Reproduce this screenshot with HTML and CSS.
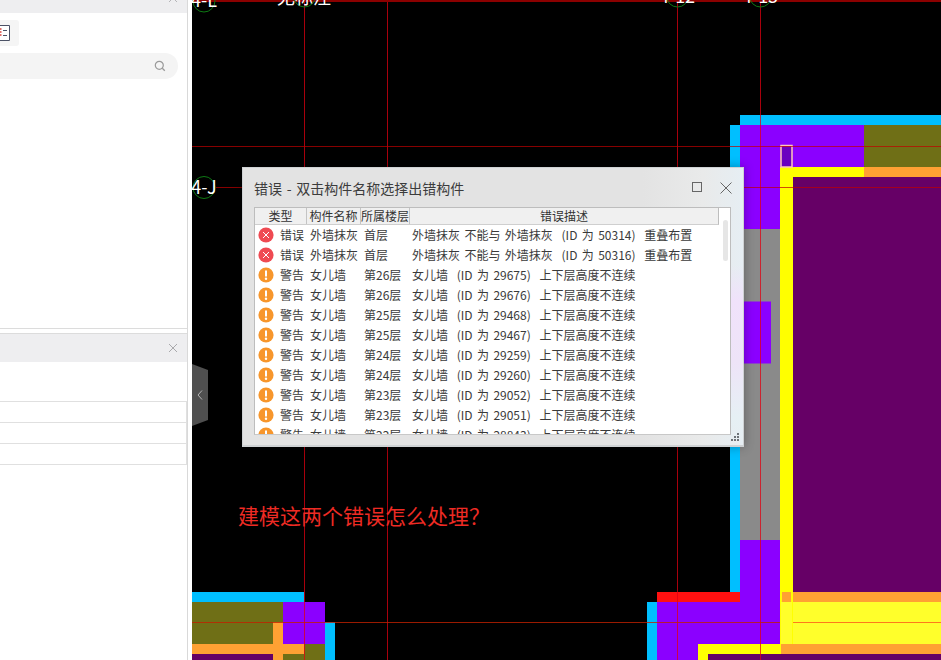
FILE: index.html
```html
<!DOCTYPE html>
<html lang="zh-CN">
<head>
<meta charset="utf-8">
<title>错误</title>
<link rel="stylesheet" href="styles.css">
</head>
<body>
<svg class="defs" width="0" height="0" aria-hidden="true">
  <symbol id="ic-err" viewBox="0 0 16 16"><circle cx="8" cy="8" r="7.6" fill="#ef4a52"/><path d="M5 5l6 6M11 5l-6 6" stroke="#fff" stroke-width="1" fill="none"/></symbol>
  <symbol id="ic-warn" viewBox="0 0 16 16"><circle cx="8" cy="8" r="7.6" fill="#f7962c"/><path d="M8 3.4v6" stroke="#fff" stroke-width="2" fill="none"/><circle cx="8" cy="11.8" r="1.2" fill="#fff"/></symbol>
</svg>
<div class="app">
  <aside class="side">
    <section class="panel panel-top">
      <header class="panel-head head-top">
        <svg class="close" width="10" height="10" viewBox="0 0 10 10"><path d="M1 1l8 8M9 1L1 9" stroke="#b5b5b8" stroke-width="1" fill="none"/></svg>
      </header>
      <div class="tools">
        <div class="tool">
          <svg width="19" height="26" viewBox="0 0 19 26"><path d="M0 5.500H9.500V20.500H0" fill="#fff" stroke="#4c5266"/><path d="M0 9h1.500M0 12h1.500M0 15h1.500" stroke="#d8403a" stroke-width="1.500"/><path d="M3 10.500h4M3 15.500h4" stroke="#4c5266"/></svg>
        </div>
      </div>
      <div class="search">
        <svg width="12" height="12" viewBox="0 0 12 12"><circle cx="5.300" cy="5.300" r="4" fill="none" stroke="#9a9a9a" stroke-width="1.200"/><path d="M8.300 8.300l2.500 2.500" stroke="#9a9a9a" stroke-width="1.300"/></svg>
      </div>
    </section>
    <section class="panel panel-bottom">
      <header class="panel-head head-bottom">
        <svg class="close" width="10" height="10" viewBox="0 0 10 10"><path d="M1 1l8 8M9 1L1 9" stroke="#a9a9ac" stroke-width="1" fill="none"/></svg>
      </header>
      <div class="rows">
        <div class="prow"></div>
        <div class="prow"></div>
        <div class="prow"></div>
      </div>
    </section>
  </aside>

  <main class="canvas">
    <svg class="drawing" width="749" height="660" viewBox="192 0 749 660">
      <rect x="192" y="0" width="749" height="660" fill="#000"/>
      <g class="cyan">
        <rect x="740" y="115" width="201" height="10"/>
        <rect x="730" y="125" width="10" height="467"/>
        <rect x="192" y="592" width="112" height="10"/>
        <rect x="325" y="622" width="10" height="38"/>
        <rect x="647" y="602" width="10" height="58"/>
      </g>
      <g class="violet">
        <rect x="740" y="125" width="124" height="42"/>
        <rect x="740" y="167" width="40" height="62"/>
        <rect x="740" y="540" width="40" height="62"/>
        <rect x="657" y="602" width="124" height="42"/>
        <rect x="657" y="644" width="41" height="16"/>
        <rect x="283" y="602" width="42" height="42"/>
      </g>
      <g class="olive">
        <rect x="864" y="125" width="77" height="42"/>
        <rect x="192" y="602" width="91" height="20"/>
        <rect x="192" y="622" width="81" height="22"/>
        <rect x="283" y="654" width="21" height="6"/>
        <rect x="304" y="644" width="21" height="16"/>
      </g>
      <g class="plum">
        <rect x="792" y="177" width="149" height="415"/>
        <rect x="708" y="654" width="233" height="6"/>
        <rect x="192" y="654" width="81" height="6"/>
      </g>
      <g class="yellow">
        <rect x="780" y="167" width="84" height="10"/>
        <rect x="780" y="177" width="13" height="467"/>
        <rect x="698" y="644" width="83" height="10"/>
        <rect x="698" y="654" width="10" height="6"/>
      </g>
      <g class="orange">
        <rect x="864" y="167" width="77" height="10"/>
        <rect x="782" y="592" width="9" height="10"/>
        <rect x="793" y="592" width="148" height="10"/>
        <rect x="781" y="644" width="160" height="10"/>
        <rect x="192" y="644" width="112" height="10"/>
        <rect x="273" y="622" width="10" height="38"/>
      </g>
      <g class="lemon">
        <rect x="781" y="602" width="11" height="42"/>
        <rect x="793" y="602" width="148" height="42"/>
      </g>
      <rect class="gray" x="740" y="229" width="40" height="311"/>
      <rect class="violet-2" x="740" y="301.500" width="31" height="62"/>
      <rect class="red" x="657" y="592" width="83" height="10"/>
      <rect class="slot" x="781" y="145.500" width="11" height="21.500"/>
      <g class="axis">
        <path d="M304.500 0V660M387.500 0V660M677.500 0V660M760.500 0V660"/>
        <path class="axis-h" d="M192 146.500H941M216 187.500H941"/>
        <path class="axis-dim" d="M192 622.500H780"/>
        <path class="axis-top" d="M192 1H941"/>
      </g>
      <path class="orange-line" d="M793 622.500H941"/>
      <g class="bubbles">
        <circle cx="204" cy="1" r="11"/>
        <circle cx="304.500" cy="-4" r="11"/>
        <circle cx="677.500" cy="-4" r="11"/>
        <circle cx="760.500" cy="-4" r="11"/>
        <circle cx="204" cy="187.500" r="11"/>
      </g>
      <g class="labels">
        <text x="204" y="7">4-L</text>
        <text x="304" y="4">无标注</text>
        <text x="677" y="3">4-12</text>
        <text x="760" y="3">4-13</text>
        <text x="204" y="194">4-J</text>
      </g>
    </svg>

    <button class="collapse" type="button" aria-label="收起">
      <svg width="6" height="10" viewBox="0 0 6 10"><path d="M5 .5L1 5l4 4.500" fill="none" stroke="#b4b4b4" stroke-width="1"/></svg>
    </button>

    <div class="dialog">
      <div class="titlebar">
        <span class="title">错误 - 双击构件名称选择出错构件</span>
        <svg class="win-btn" width="11" height="11" viewBox="0 0 11 11"><rect x=".5" y=".5" width="9" height="9" fill="none" stroke="#666"/></svg>
        <svg class="win-btn win-close" width="12" height="12" viewBox="0 0 12 12"><path d="M.5.500l11 11M11.500.500l-11 11" stroke="#666" fill="none"/></svg>
      </div>
      <div class="list">
        <div class="list-head">
          <span class="hc hc-type">类型</span>
          <span class="hc hc-name">构件名称</span>
          <span class="hc hc-floor">所属楼层</span>
          <span class="hc hc-desc">错误描述</span>
        </div>
        <div class="row"><svg class="ic"><use href="#ic-err"/></svg><span>错误</span><span>外墙抹灰</span><span>首层</span><span class="d">外墙抹灰 不能与 外墙抹灰  (ID 为 50314)  重叠布置</span></div>
        <div class="row"><svg class="ic"><use href="#ic-err"/></svg><span>错误</span><span>外墙抹灰</span><span>首层</span><span class="d">外墙抹灰 不能与 外墙抹灰  (ID 为 50316)  重叠布置</span></div>
        <div class="row"><svg class="ic"><use href="#ic-warn"/></svg><span>警告</span><span>女儿墙</span><span>第26层</span><span class="d">女儿墙  (ID 为 29675)  上下层高度不连续</span></div>
        <div class="row"><svg class="ic"><use href="#ic-warn"/></svg><span>警告</span><span>女儿墙</span><span>第26层</span><span class="d">女儿墙  (ID 为 29676)  上下层高度不连续</span></div>
        <div class="row"><svg class="ic"><use href="#ic-warn"/></svg><span>警告</span><span>女儿墙</span><span>第25层</span><span class="d">女儿墙  (ID 为 29468)  上下层高度不连续</span></div>
        <div class="row"><svg class="ic"><use href="#ic-warn"/></svg><span>警告</span><span>女儿墙</span><span>第25层</span><span class="d">女儿墙  (ID 为 29467)  上下层高度不连续</span></div>
        <div class="row"><svg class="ic"><use href="#ic-warn"/></svg><span>警告</span><span>女儿墙</span><span>第24层</span><span class="d">女儿墙  (ID 为 29259)  上下层高度不连续</span></div>
        <div class="row"><svg class="ic"><use href="#ic-warn"/></svg><span>警告</span><span>女儿墙</span><span>第24层</span><span class="d">女儿墙  (ID 为 29260)  上下层高度不连续</span></div>
        <div class="row"><svg class="ic"><use href="#ic-warn"/></svg><span>警告</span><span>女儿墙</span><span>第23层</span><span class="d">女儿墙  (ID 为 29052)  上下层高度不连续</span></div>
        <div class="row"><svg class="ic"><use href="#ic-warn"/></svg><span>警告</span><span>女儿墙</span><span>第23层</span><span class="d">女儿墙  (ID 为 29051)  上下层高度不连续</span></div>
        <div class="row"><svg class="ic"><use href="#ic-warn"/></svg><span>警告</span><span>女儿墙</span><span>第22层</span><span class="d">女儿墙  (ID 为 28843)  上下层高度不连续</span></div>
        <div class="scroll-thumb"></div>
      </div>
      <svg class="grip" width="9" height="9" viewBox="0 0 9 9"><path d="M6 0h2v2H6zM3 3h2v2H3zM6 3h2v2H6zM0 6h2v2H0zM3 6h2v2H3zM6 6h2v2H6z" fill="#6e7378"/></svg>
    </div>

    <p class="note">建模这两个错误怎么处理？</p>
  </main>
</div>
</body>
</html>
```

FILE: styles.css
```css
* { box-sizing: border-box; }
html, body { margin: 0; padding: 0; height: 100%; overflow: hidden; }
body { font-family: "Noto Sans CJK SC", "Noto Sans", sans-serif; background: #000; }
.defs { position: absolute; }

.app { display: flex; width: 941px; height: 660px; }

/* left side panels */
.side {
  width: 192px; flex: none; height: 660px; background: #fff;
  display: flex; flex-direction: column; gap: 4px;
  padding-right: 4px; position: relative;
}
.side::after { content: ""; position: absolute; left: 187px; top: 0; bottom: 0; width: 1px; background: #d9d9d9; }
.panel { width: 187px; background: #fff; }
.panel-top { height: 329px; border-bottom: 1px solid #dcdcdc; }
.panel-bottom { flex: 1; border-top: 1px solid #dcdcdc; }
.panel-head { background: #eeeef0; display: flex; align-items: center; justify-content: flex-end; }
.head-top { height: 13px; padding-right: 9px; overflow: hidden; }
.head-top .close { margin-top: -17px; }
.head-bottom { height: 28px; padding-right: 9px; }
.tools { padding-top: 7px; height: 40px; }
.tool { width: 19px; height: 26px; background: #f5f5f5; border-radius: 0 3px 3px 0; }
.tool svg { display: block; }
.search {
  width: 178px; height: 26px; background: #f4f4f4; border-radius: 0 13px 13px 0;
  display: flex; align-items: center; justify-content: flex-end; padding-right: 12px;
}
.rows { margin-top: 39px; width: 187px; border-top: 1px solid #e0e0e0; }
.prow { height: 21px; border-right: 1px solid #e0e0e0; border-bottom: 1px solid #e0e0e0; }

/* CAD canvas */
.canvas { position: relative; width: 749px; height: 660px; overflow: hidden; }
.drawing { display: block; }
.cyan rect { fill: #00bfff; }
.violet rect, .violet-2 { fill: #8b00ff; }
.olive rect { fill: #6f6f16; }
.plum rect { fill: #660066; }
.yellow rect { fill: #ffff00; }
.orange rect { fill: #ffa133; }
.lemon rect { fill: #ffff2b; }
.gray { fill: #8a8a8a; }
.red { fill: #ff1010; }
.slot { fill: #6a00c0; stroke: #ffc8b8; stroke-width: 1.500; }
.axis path { fill: none; stroke: #e00010; stroke-opacity: .75; stroke-width: 1; }
.axis .axis-h { stroke: #c00000; stroke-opacity: .7; }
.axis .axis-dim { stroke: #c02000; stroke-opacity: .8; }
.axis .axis-top { stroke: #8b0000; stroke-opacity: 1; stroke-width: 2; }
.orange-line { fill: none; stroke: #ff7a1a; stroke-width: 1; }
.bubbles circle { fill: none; stroke: #0e7a14; stroke-width: 1; }
.labels text { fill: #fff; font-size: 18px; text-anchor: middle; font-family: "Noto Sans CJK SC", sans-serif; }

.collapse {
  position: absolute; left: 0; top: 364px; width: 16px; height: 62px;
  padding: 0; border: 0; background: #4f4f4f;
  clip-path: polygon(0 0, 100% 6px, 100% 56px, 0 100%);
  display: flex; align-items: center; justify-content: center;
}

/* dialog window */
.dialog {
  position: absolute; left: 50px; top: 167px; width: 502px; height: 280px;
  display: flex; flex-direction: column; padding: 0 12px 10px 11px;
  border: 1px solid #cfd2d4; border-width: 1px 1px 2px 1px;
  background:
    linear-gradient(180deg, rgba(232,240,245,0) 35%, #f0e2fb 48%, #eee4f8 70%, #e6f0f4 90%, rgba(230,240,244,0) 100%) right top / 12px 100% no-repeat,
    linear-gradient(90deg, #e3e3e3 0, #e3e3e3 80%, #e9eaea 92%, #e6eef3 100%);
  box-shadow: 0 0 10px rgba(0,0,0,.3);
  color: #333;
}
.titlebar { height: 39px; flex: none; display: flex; align-items: center; margin-right: -1px; }
.title { flex: 1; font-size: 14px; word-spacing: 1.500px; color: #3c3c3c; }
.win-btn { display: block; flex: none; }
.win-close { margin-left: 17px; }
.list {
  position: relative; flex: 1; background: #fff; overflow: hidden;
  border: 1px solid #bdbdbd; border-bottom-color: #c8c8c8;
}
.list-head {
  display: flex; height: 17px; width: 464px; background: #f0f0f0;
  border-bottom: 1px solid #cfcfcf; border-right: 1px solid #bdbdbd;
  font-size: 12px; line-height: 16px; color: #333;
}
.hc { text-align: center; border-right: 1px solid #c4c4c4; white-space: nowrap; }
.hc-type { width: 52px; }
.hc-name { width: 54px; }
.hc-floor { width: 49px; }
.hc-desc { flex: 1; border-right: 0; }
.row {
  display: grid; grid-template-columns: 25px 30px 54px 48px 1fr;
  height: 20px; align-items: center; font-size: 12px; line-height: 20px;
  color: #3a3a3a; white-space: nowrap;
}
.ic { width: 16px; height: 16px; margin-left: 3px; display: block; }
.d { white-space: pre; word-spacing: 1.700px; }
.scroll-thumb {
  position: absolute; left: 468px; top: 12px; width: 5px; height: 41px;
  background: #e6e6e6; border-radius: 3px;
}
.grip { position: absolute; right: 3px; bottom: 3px; }

.note {
  position: absolute; left: 46px; top: 500px; margin: 0;
  font-size: 21px; line-height: 30px; color: #ee2b24; white-space: nowrap;
}
```
